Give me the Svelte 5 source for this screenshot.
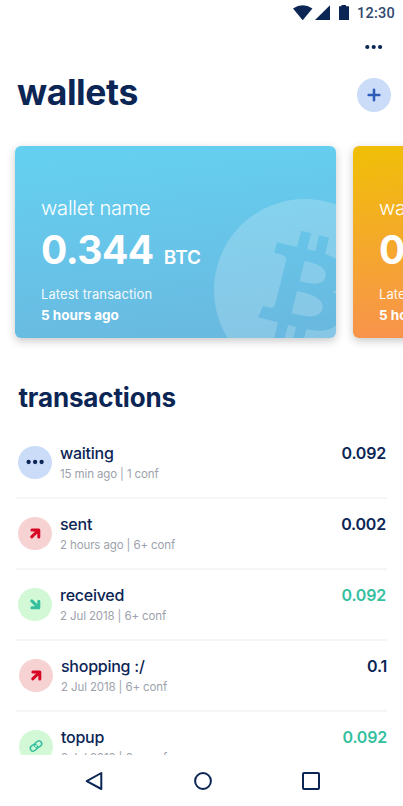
<script>
  const wallets = [
    { name: 'wallet name', amount: '0.344', unit: 'BTC', last: '5 hours ago', theme: 'blue', coin: true },
    { name: 'wallet name', amount: '0.344', unit: 'BTC', last: '5 hours ago', theme: 'orange', coin: false },
  ];
  const transactions = [
    { title: 'waiting', meta: '15 min ago | 1 conf', amount: '0.092', kind: 'waiting' },
    { title: 'sent', meta: '2 hours ago | 6+ conf', amount: '0.002', kind: 'sent' },
    { title: 'received', meta: '2 Jul 2018 | 6+ conf', amount: '0.092', kind: 'received', positive: true },
    { title: 'shopping :/', meta: '2 Jul 2018 | 6+ conf', amount: '0.1', kind: 'sent', inset: true },
    { title: 'topup', meta: '2 Jul 2018 | 6+ conf', amount: '0.092', kind: 'linked', positive: true, inset: true },
  ];
</script>

<div class="screen">
  <div class="status">
    <svg class="signals" width="58" height="16" viewBox="0 0 58 16" aria-hidden="true">
      <path d="M0 3.4Q9.7-3 19.4 3.4L9.7 15.2Z" />
      <path d="M22 15H37V0.2Z" />
      <path d="M46 1.2h2.5V0h4.5v1.2H56V15H46Z" />
    </svg>
    <span class="clock">12:30</span>
  </div>

  <div class="more">
    <svg width="18" height="6" viewBox="0 0 18 6" aria-hidden="true">
      <circle cx="2.3" cy="3" r="2.1" /><circle cx="8.7" cy="3" r="2.1" /><circle cx="15.1" cy="3" r="2.1" />
    </svg>
  </div>

  <header class="heading">
    <h1>wallets</h1>
    <button class="add" aria-label="Add wallet">
      <svg width="14" height="14" viewBox="0 0 14 14"><path d="M7 1.7V12.3M1.7 7H12.3" /></svg>
    </button>
  </header>

  <section class="cards">
    {#each wallets as w}
      <article class="card {w.theme}">
        {#if w.coin}
          <svg class="coin" width="182" height="182" viewBox="0 0 24 24" aria-hidden="true">
            <path d="M23.638 14.904c-1.602 6.43-8.113 10.34-14.542 8.736C2.67 22.05-1.244 15.525.362 9.105 1.962 2.67 8.475-1.243 14.9.358c6.43 1.605 10.342 8.115 8.738 14.548v-.002zm-6.35-4.613c.24-1.59-.974-2.45-2.64-3.03l.54-2.153-1.315-.33-.525 2.107c-.345-.087-.705-.167-1.064-.25l.526-2.127-1.32-.33-.54 2.165c-.285-.067-.565-.132-.84-.2l-1.815-.45-.35 1.407s.975.225.955.236c.535.136.63.486.615.766l-1.477 5.92c-.075.166-.24.406-.614.314.015.02-.96-.24-.96-.24l-.66 1.51 1.71.426.93.242-.54 2.19 1.32.327.54-2.17c.36.1.705.19 1.05.273l-.51 2.154 1.32.33.545-2.19c2.24.427 3.93.257 4.64-1.774.57-1.637-.03-2.58-1.217-3.196.854-.193 1.5-.76 1.68-1.93h.01zm-3.01 4.22c-.404 1.64-3.157.75-4.05.53l.72-2.9c.896.23 3.757.67 3.33 2.37zm.41-4.24c-.37 1.49-2.662.735-3.405.55l.654-2.64c.744.18 3.137.524 2.75 2.084v.006z" />
          </svg>
        {/if}
        <div class="name">{w.name}</div>
        <div class="balance"><strong>{w.amount}</strong><span>{w.unit}</span></div>
        <div class="latest">Latest transaction</div>
        <div class="when">{w.last}</div>
      </article>
    {/each}
  </section>

  <section class="history">
    <h2>transactions</h2>
    <ul>
      {#each transactions as t}
        <li class:inset={t.inset}>
          <span class="badge {t.kind}">
            <svg width="18" height="18" viewBox="0 0 18 18" aria-hidden="true">
              {#if t.kind === 'waiting'}
                <g class="solid"><circle cx="2.6" cy="9" r="2.15" /><circle cx="9.1" cy="9" r="2.15" /><circle cx="15.6" cy="9" r="2.15" /></g>
              {:else if t.kind === 'sent'}
                <path d="M5.9 5.9H12.8V12.9M12.4 6.3L5.7 12.8" />
              {:else if t.kind === 'received'}
                <path d="M5.8 5.9L12.4 12.4M12.8 6.3V12.8H5.9" />
              {:else}
                <g class="link" transform="rotate(-38 9 9)">
                  <path d="M10.3 9.9A2.9 2.9 0 0 1 7.8 11.7H5.2A2.7 2.7 0 0 1 5.2 6.3H7.4A2.8 2.8 0 0 1 9.9 8" />
                  <path d="M7.7 8.1A2.9 2.9 0 0 1 10.2 6.3H12.8A2.7 2.7 0 0 1 12.8 11.7H10.6A2.8 2.8 0 0 1 8.1 10" />
                </g>
              {/if}
            </svg>
          </span>
          <div class="details">
            <div class="title">{t.title}</div>
            <div class="meta">{t.meta}</div>
          </div>
          <div class="amount" class:positive={t.positive}>{t.amount}</div>
        </li>
      {/each}
    </ul>
  </section>

  <nav>
    <svg width="18" height="20" viewBox="0 0 18 20" aria-label="Back"><path d="M16.3 2V18L1.7 10.2Z" /></svg>
    <svg width="20" height="20" viewBox="0 0 20 20" aria-label="Home"><circle cx="10" cy="10" r="7.9" /></svg>
    <svg width="18" height="18" viewBox="0 0 18 18" aria-label="Recent"><rect x="1" y="1" width="16" height="16" rx="1" /></svg>
  </nav>
</div>

<style>
  .screen {
    width: 403px;
    height: 806px;
    box-sizing: border-box;
    overflow: hidden;
    display: flex;
    flex-direction: column;
    background: #fff;
    color: #0b2555;
    font-family: Inter, 'Liberation Sans', sans-serif;
  }
  .status {
    flex: none;
    height: 26px;
    display: flex;
    justify-content: flex-end;
    align-items: center;
    padding-right: 7px;
    gap: 6px;
  }
  .signals { fill: #0b2555; margin-bottom: 1px; }
  .clock {
    font: 500 14.5px/20px Roboto, sans-serif;
    color: #32476f;
    width: 39px;
    letter-spacing: 0.25px;
    white-space: nowrap;
    padding-top: 1px;
  }
  .more {
    flex: none;
    height: 42px;
    display: flex;
    align-items: center;
    justify-content: flex-end;
    padding-right: 20px;
    box-sizing: border-box;
  }
  .more svg { fill: #0b2555; }
  .heading {
    flex: none;
    height: 54px;
    display: flex;
    align-items: center;
    justify-content: space-between;
    padding: 0 12px 0 17px;
  }
  h1 {
    margin: 0;
    padding-bottom: 4px;
    font-size: 35.5px;
    line-height: 42px;
    font-weight: 700;
    letter-spacing: -0.4px;
  }
  .add {
    width: 34.5px;
    height: 34.5px;
    padding: 0;
    border: 0;
    border-radius: 50%;
    background: #cbdcf9;
    display: flex;
    align-items: center;
    justify-content: center;
  }
  .add path { stroke: #2d5cb8; stroke-width: 2.6; stroke-linecap: round; }
  .cards {
    flex: none;
    display: flex;
    gap: 17px;
    padding: 24px 0 0 15px;
  }
  .card {
    flex: none;
    position: relative;
    width: 321px;
    height: 192px;
    box-sizing: border-box;
    padding: 50px 26px 0;
    border-radius: 6px;
    color: #fff;
    box-shadow: 0 3px 10px rgba(0, 0, 0, 0.22);
  }
  .blue { background: linear-gradient(174deg, #65cff0 8%, #69b9e0 94%); overflow: hidden; }
  .orange { background: linear-gradient(174deg, #f1bd0b 5%, #f98e55 97%); }
  .coin {
    position: absolute;
    left: 199px;
    top: 52.5px;
    fill: rgba(255, 255, 255, 0.2);
  }
  .name { font-size: 20px; line-height: 24px; font-weight: 300; letter-spacing: -0.2px; }
  .balance { display: flex; align-items: baseline; gap: 10px; height: 48px; margin-top: 6px; line-height: 48px; }
  .balance strong { font-size: 39px; font-weight: 700; letter-spacing: -0.5px; }
  .balance span { font-size: 19px; font-weight: 600; }
  .latest { margin-top: 11px; font-size: 13px; line-height: 18px; font-weight: 400; letter-spacing: 0.08px; opacity: 0.92; }
  .when { margin-top: 3px; font-size: 13.5px; line-height: 18px; font-weight: 700; }
  .history {
    flex: none;
    height: 417px;
    overflow: hidden;
    padding: 43px 16px 0;
    box-sizing: border-box;
  }
  h2 { margin: 0 0 12.5px 2.5px; font-size: 26px; line-height: 34px; font-weight: 700; letter-spacing: -0.15px; }
  ul { list-style: none; margin: 0; padding: 0; }
  li {
    height: 71px;
    box-sizing: border-box;
    display: flex;
    align-items: flex-start;
    padding: 18px 1px 0;
    border-bottom: 2px solid #f5f5f6;
  }
  li.inset { padding-left: 2px; padding-right: 0; }
  .badge {
    flex: none;
    width: 34px;
    height: 33.5px;
    margin-left: 0.5px;
    border-radius: 50%;
    display: flex;
    align-items: center;
    justify-content: center;
  }
  .badge svg { fill: none; stroke-width: 3; stroke-linecap: round; stroke-linejoin: round; }
  .waiting { background: #cbdcf9; }
  .waiting .solid { fill: #0b2555; }
  .sent { background: #f7d2d3; stroke: #d70825; }
  .received, .linked { background: #d2f8d6; stroke: #35bf9f; }
  .link { stroke-width: 1.5; }
  .details { flex: 1; margin: -3px 0 0 8.5px; }
  .title { font-size: 16px; line-height: 20px; font-weight: 500; letter-spacing: -0.25px; }
  .meta { margin-top: 2.5px; font-size: 11.5px; line-height: 18px; font-weight: 400; letter-spacing: -0.12px; color: #9da2ac; }
  .amount { margin-top: -3px; font-size: 16px; line-height: 20px; font-weight: 600; letter-spacing: -0.2px; }
  .positive { color: #35bf9f; }
  nav {
    flex: 1;
    display: flex;
    align-items: center;
    justify-content: space-between;
    padding: 0 83px 0 85px;
    background: #fff;
  }
  nav svg { fill: none; stroke: #0b2555; stroke-width: 2; stroke-linejoin: round; }
</style>
